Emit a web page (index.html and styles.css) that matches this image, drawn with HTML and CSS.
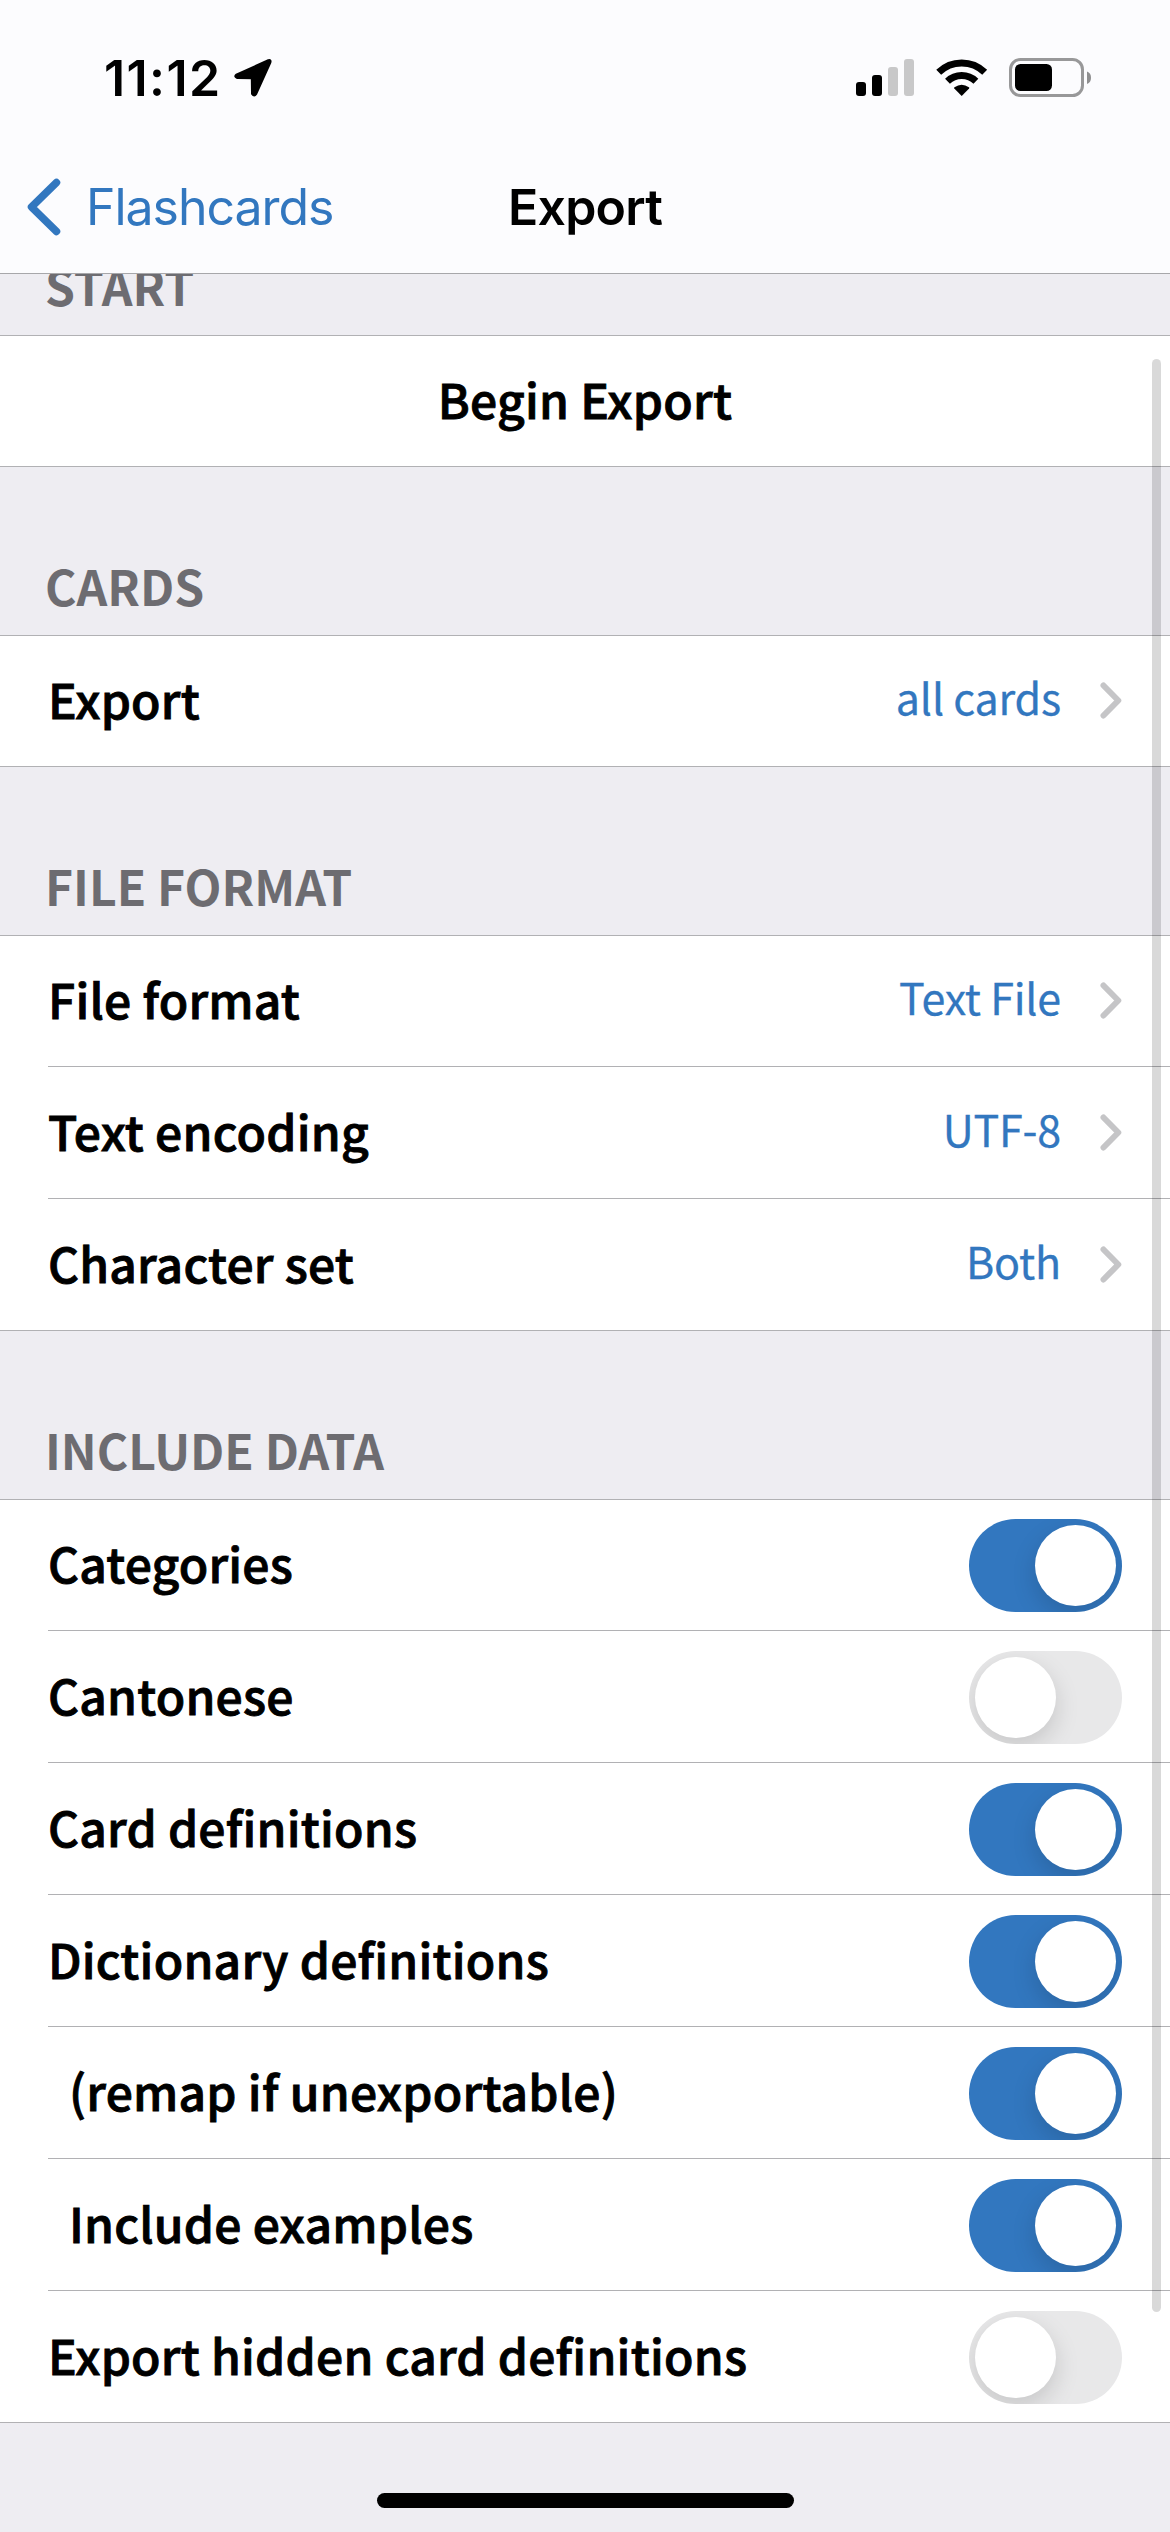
FILE: index.html
```html
<!DOCTYPE html>
<html lang="en">
<head>
<meta charset="utf-8">
<title>Export</title>
<link rel="stylesheet" href="styles.css">
</head>
<body>
<header class="top">
  <div class="status">
    <span class="time">11:12</span>
    <svg class="location" width="40" height="40" viewBox="0 0 40 40"><path d="M3.500 17.200 35.500 2.700Q37.600 2 36.900 4.300L22.800 35.700Q21.200 38.200 19.500 35.700L19.300 19.700 4.400 19.500Q1.800 18.700 3.500 17.200Z" fill="#000" stroke="#000" stroke-width="3" stroke-linejoin="round"/></svg>
    <svg class="indicators" width="240" height="44" viewBox="0 0 240 44">
      <rect x="0" y="25" width="10" height="14" rx="3"/>
      <rect x="16" y="18" width="10" height="21" rx="3"/>
      <rect x="32" y="10" width="10" height="29" rx="3" fill="#c8c8c9"/>
      <rect x="48" y="2" width="10" height="37" rx="3" fill="#c8c8c9"/>
      <g fill="none" stroke="#000">
        <path d="M82.700 15.300A33 33 0 0 1 128.700 15.300" stroke-width="7"/>
        <path d="M91.500 24.300A20.500 20.500 0 0 1 119.900 24.300" stroke-width="7"/>
      </g>
      <path d="M105.700 39 98.300 31.500Q97.700 30.800 98.500 30.200 105.700 25.200 112.900 30.200 113.700 30.800 113.100 31.500Z"/>
      <rect x="154.500" y="2.500" width="72" height="36" rx="10" fill="none" stroke="#989899" stroke-width="3"/>
      <rect x="159" y="7" width="37" height="27" rx="5.500"/>
      <path d="M231 14.500Q235 16 235 20.700 235 25.500 231 27Z" fill="#8f8f90"/>
    </svg>
  </div>
  <nav class="nav">
    <a class="back">
      <svg width="34" height="58" viewBox="0 0 34 58"><path d="M29.500 4.500 4.500 29 29.500 53.500" fill="none" stroke="#3277bf" stroke-width="7.500" stroke-linecap="round" stroke-linejoin="round"/></svg>
      <span>Flashcards</span>
    </a>
    <h1 class="title">Export</h1>
  </nav>
</header>
<main class="settings">
  <h2 class="heading heading-clipped">START</h2>
  <section class="group">
    <div class="row row-action"><span class="label">Begin Export</span></div>
  </section>
  <h2 class="heading">CARDS</h2>
  <section class="group">
    <div class="row"><span class="label">Export</span><span class="value">all cards</span><svg class="chevron" width="22" height="37" viewBox="0 0 22 37"><path d="M3.500 3.500 18.300 18.500 3.500 33.500"/></svg></div>
  </section>
  <h2 class="heading">FILE FORMAT</h2>
  <section class="group">
    <div class="row"><span class="label">File format</span><span class="value">Text File</span><svg class="chevron" width="22" height="37" viewBox="0 0 22 37"><path d="M3.500 3.500 18.300 18.500 3.500 33.500"/></svg></div>
    <div class="row"><span class="label">Text encoding</span><span class="value">UTF-8</span><svg class="chevron" width="22" height="37" viewBox="0 0 22 37"><path d="M3.500 3.500 18.300 18.500 3.500 33.500"/></svg></div>
    <div class="row"><span class="label">Character set</span><span class="value">Both</span><svg class="chevron" width="22" height="37" viewBox="0 0 22 37"><path d="M3.500 3.500 18.300 18.500 3.500 33.500"/></svg></div>
  </section>
  <h2 class="heading">INCLUDE DATA</h2>
  <section class="group">
    <div class="row"><span class="label">Categories</span><span class="switch on"><i class="knob"></i></span></div>
    <div class="row"><span class="label">Cantonese</span><span class="switch"><i class="knob"></i></span></div>
    <div class="row"><span class="label">Card definitions</span><span class="switch on"><i class="knob"></i></span></div>
    <div class="row"><span class="label">Dictionary definitions</span><span class="switch on"><i class="knob"></i></span></div>
    <div class="row"><span class="label label-sub">(remap if unexportable)</span><span class="switch on"><i class="knob"></i></span></div>
    <div class="row"><span class="label label-sub">Include examples</span><span class="switch on"><i class="knob"></i></span></div>
    <div class="row"><span class="label">Export hidden card definitions</span><span class="switch"><i class="knob"></i></span></div>
  </section>
</main>
<div class="scrollbar"></div>
<div class="home"></div>
</body>
</html>
```
FILE: styles.css
```css
* { box-sizing: border-box; margin: 0; padding: 0; }
body {
  position: relative;
  width: 1170px;
  height: 2532px;
  overflow: hidden;
  background: #eeedf2;
  color: #000;
  font-family: "Noto Sans CJK SC", "Noto Sans", sans-serif;
}

.top {
  height: 274px;
  background: #fcfcfe;
  border-bottom: 1px solid #a7a7aa;
  font-family: Inter, "Liberation Sans", sans-serif;
}
.status {
  display: flex;
  height: 141px;
  padding: 57px 0 0 104px;
}
.time {
  width: 129px;
  font-size: 50px;
  font-weight: 600;
  line-height: 42px;
  letter-spacing: 1.4px;
  white-space: nowrap;
}
.location { margin-top: 1px; }
.indicators { margin-left: 583px; }
.nav {
  display: grid;
  grid-template-columns: 1fr auto 1fr;
  align-items: center;
  height: 132px;
}
.back {
  display: flex;
  align-items: center;
  gap: 25px;
  padding-left: 27px;
  color: #3277bf;
  font-size: 50px;
  line-height: 60px;
  letter-spacing: -1.05px;
}
.title {
  font-size: 50px;
  font-weight: 600;
  line-height: 60px;
  letter-spacing: -0.8px;
}

.heading {
  display: flex;
  align-items: flex-end;
  height: 168px;
  padding: 0 0 15px 45px;
  color: #6d6c71;
  font-size: 48px;
  font-weight: 700;
  line-height: 70px;
}
.heading-clipped { height: 61px; overflow: hidden; }

.group {
  background: #fff;
  border-top: 1px solid #b1b1b4;
}
.row {
  display: flex;
  align-items: center;
  height: 132px;
  margin-left: 48px;
  padding-right: 48px;
  border-bottom: 1px solid #b1b1b4;
}
.row:first-child { margin-top: -1px; }
.row:last-child { margin-left: 0; padding-left: 48px; }
.row-action { justify-content: center; }
.label {
  padding-bottom: 6px;
  font-size: 48px;
  font-weight: 500;
  line-height: 70px;
  letter-spacing: 0.23px;
  white-space: nowrap;
  -webkit-text-stroke: 0.9px #000;
}
.label-sub { padding-left: 21px; }
.value {
  margin-left: auto;
  padding-bottom: 9px;
  color: #3277bf;
  font-size: 43px;
  line-height: 64px;
  letter-spacing: -0.2px;
  -webkit-text-stroke: 0.3px #3277bf;
}
.chevron {
  margin-left: 39px;
  fill: none;
  stroke: #c5c5c7;
  stroke-width: 6;
  stroke-linecap: round;
  stroke-linejoin: round;
}
.switch {
  display: flex;
  width: 153px;
  height: 93px;
  margin: 2px 0 0 auto;
  padding: 6px;
  overflow: hidden;
  border-radius: 47px;
  background: #e8e8e9;
}
.knob {
  width: 81px;
  height: 81px;
  border-radius: 50%;
  background: #fff;
  box-shadow: 0 9px 24px rgba(0, 0, 0, 0.15);
}
.on { justify-content: flex-end; background: #3277bf; }

.scrollbar {
  position: absolute;
  top: 359px;
  left: 1152px;
  width: 9px;
  height: 1953px;
  border-radius: 5px;
  background: rgba(0, 0, 0, 0.15);
}
.home {
  position: absolute;
  bottom: 24px;
  left: 377px;
  width: 417px;
  height: 15px;
  border-radius: 8px;
  background: #000;
}
```
